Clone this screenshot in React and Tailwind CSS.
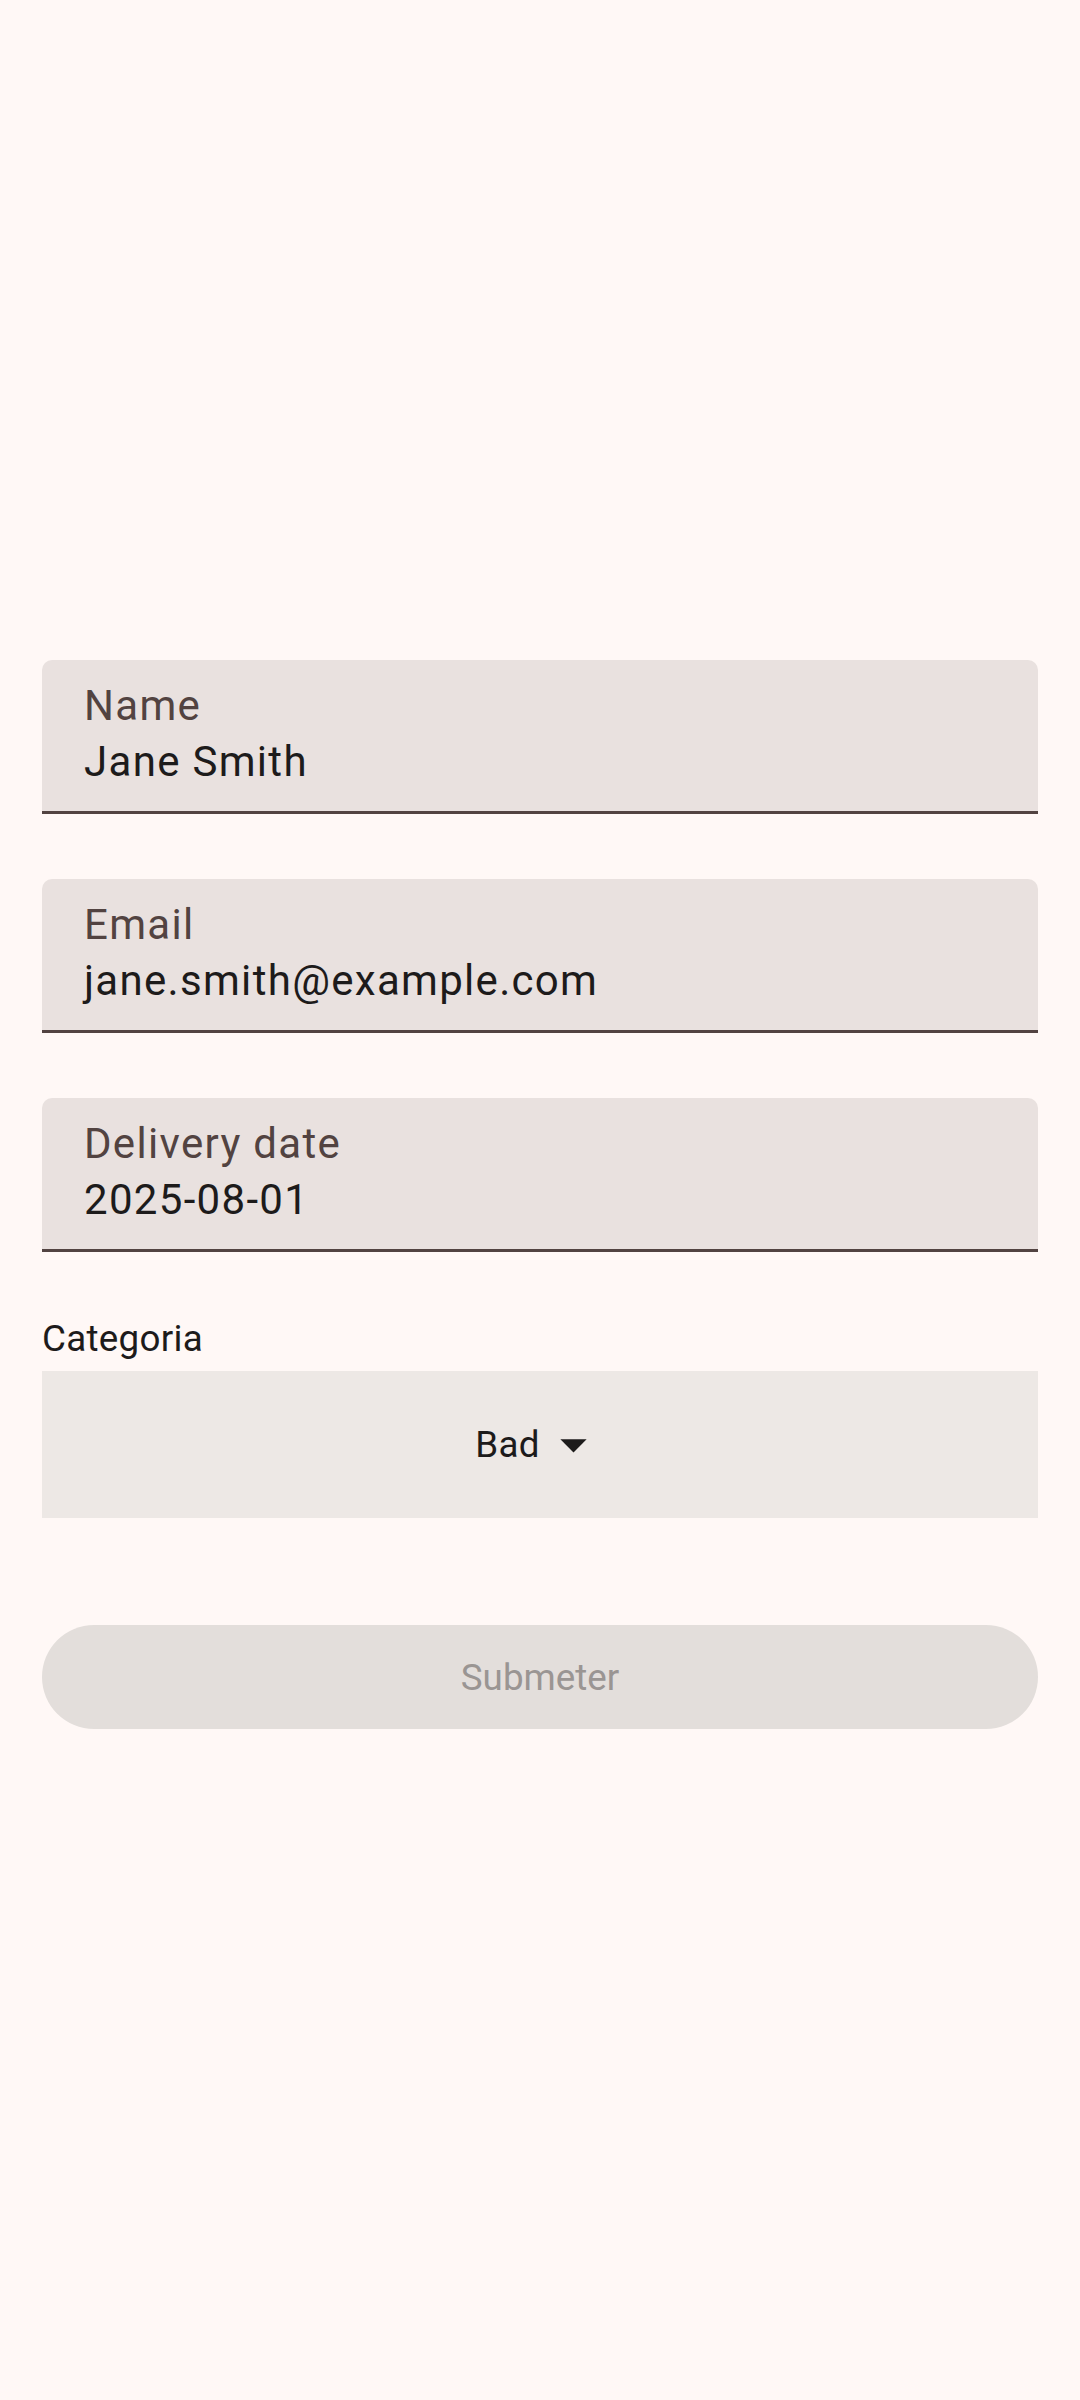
const fields = [
  { label: 'Name', value: 'Jane Smith' },
  { label: 'Email', value: 'jane.smith@example.com' },
  { label: 'Delivery date', value: '2025-08-01' },
];

function FilledField({ label, value }) {
  return (
    <div className="h-[154px] rounded-t-[10px] bg-[#e9e1df] border-b-[3px] border-[#524341] pt-[22px] px-[42px]">
      <div className="text-[42px] leading-[48px] tracking-[1.31px] text-[#524341]">{label}</div>
      <div className="mt-[8px] text-[42px] leading-[48px] tracking-[1.31px] text-[#1d1b1b]">{value}</div>
    </div>
  );
}

export default function App() {
  return (
    <div className="min-h-[2400px] bg-[#fff8f6] px-[42px] pt-[660px] font-['Roboto','Liberation_Sans',sans-serif]">
      <div className="flex flex-col gap-[65px]">
        {fields.map(f => <FilledField key={f.label} {...f} />)}
      </div>

      <div className="mt-[61px] text-[36.75px] leading-[52px] tracking-[0.3px] text-[#1d1b1b]">Categoria</div>
      <button className="mt-[6px] w-full h-[147px] bg-[#ede8e5] flex items-center justify-center text-[#1d1b1b]">
        <span className="text-[36.75px] leading-[43px] tracking-[0.3px]">Bad</span>
        <svg width="63" height="63" viewBox="0 0 24 24" className="ml-[2px]">
          <path d="M7 10l5 5 5-5z" fill="#1d1b1b" />
        </svg>
      </button>

      <button className="mt-[107px] w-full h-[104px] rounded-full bg-[#e3dedb] flex items-center justify-center">
        <span className="text-[36.75px] leading-[43px] text-[#9a9593]">Submeter</span>
      </button>
    </div>
  );
}
